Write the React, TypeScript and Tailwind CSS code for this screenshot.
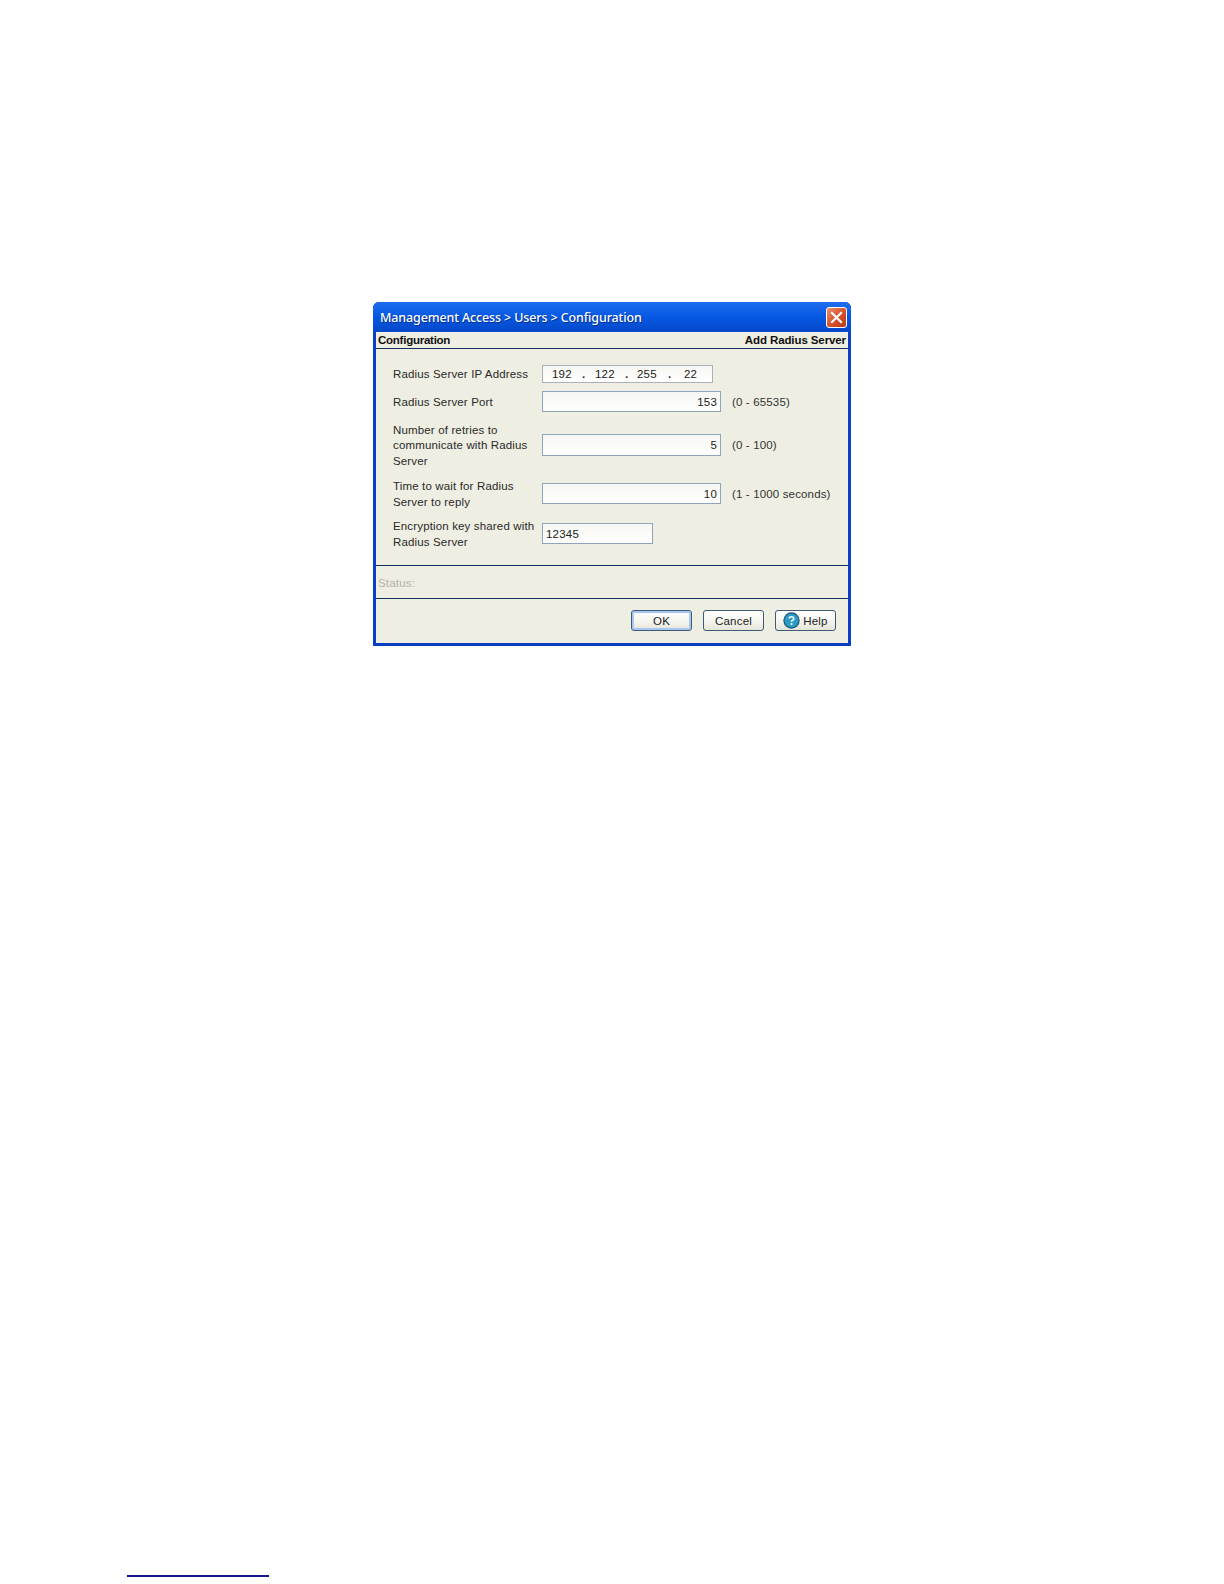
import React from "react";

const labelCls = "w-[149px] shrink-0 pt-[2px] text-[11.5px] leading-[15.3px] text-[#2a2a2a] tracking-[0.15px]";
const inputCls = "border border-[#8fa3bf] bg-gradient-to-b from-[#f6f6f2] to-[#ffffff] pt-[2px] text-[11.5px] text-[#222] tracking-[0.2px] flex items-center";
const hintCls = "ml-[11px] pt-[2px] text-[11.5px] text-[#333] tracking-[0.15px] whitespace-nowrap";
const btnCls = "w-[61px] h-[21px] pt-[2px] rounded-[3px] border border-[#3f5a78] bg-gradient-to-b from-[#ffffff] via-[#f6f6f0] to-[#e6e5da] text-[11.5px] text-[#222] tracking-[0.2px] flex items-center justify-center";

function NumRow({ label, value, hint, h, mt, rowH }: { label: React.ReactNode; value: string; hint: string; h: string; mt: string; rowH: string }) {
  return (
    <div className={`flex items-center ${mt} ${rowH}`}>
      <div className={labelCls}>{label}</div>
      <div className={`${inputCls} ${h} w-[179px] justify-end pr-[3px]`}>{value}</div>
      <div className={hintCls}>{hint}</div>
    </div>
  );
}

export default function App() {
  return (
    <div className="relative h-[1584px] w-[1224px] bg-white overflow-hidden font-['Liberation_Sans',Arial,sans-serif]">
      <div className="pl-[373px] pt-[302px]">
        <div className="flex h-[344px] w-[478px] flex-col rounded-t-[6px] rounded-b-[1px] border-x-[3px] border-b-[3px] border-[#0a3fc4] bg-[#0a3fc4]">
          <div className="-mx-[3px] flex h-[30px] shrink-0 items-center justify-between rounded-t-[6px] bg-gradient-to-b from-[#1f6df0] via-[#0558e2] to-[#0448c8] pl-[7px] pr-[4px]">
            <span className="font-['Noto_Sans',sans-serif] text-[12.5px] font-medium tracking-[-0.13px] text-white [text-shadow:1px_1px_0_#0a2f90] pt-[3px]">
              Management Access &gt; Users &gt; Configuration
            </span>
            <span className="flex h-[21px] w-[21px] items-center justify-center rounded-[3px] border border-white bg-gradient-to-br from-[#e8906c] via-[#d9542c] to-[#b83a18]">
              <svg width="13" height="13" viewBox="0 0 13 13">
                <path d="M2 2 L11 11 M11 2 L2 11" stroke="#ffffff" strokeWidth="2.2" strokeLinecap="square" />
              </svg>
            </span>
          </div>
          <div className="flex flex-1 flex-col bg-[#eeeee2] border-t border-[#f4f4ec]">
            <div className="flex h-[16px] shrink-0 items-center justify-between border-b border-[#14305c] pl-[2px] pr-[2px] text-[11.5px] font-bold tracking-[-0.1px] text-[#111]">
              <span className="tracking-[-0.25px]">Configuration</span>
              <span>Add Radius Server</span>
            </div>

            <div className="pl-[17px]">
              <div className="mt-[16px] flex h-[18px] items-center">
                <div className={labelCls}>Radius Server IP Address</div>
                <div className={`${inputCls} h-[18px] w-[171px] border-[#a9b1bc] pl-[9px] whitespace-pre`}>
                  <span className="w-[30px]">192</span>
                  <span className="w-[12px] font-bold">.</span>
                  <span className="w-[31px] pl-[1px]">122</span>
                  <span className="w-[12px] font-bold">.</span>
                  <span className="w-[31px]">255</span>
                  <span className="w-[16px] font-bold">.</span>
                  <span>22</span>
                </div>
              </div>
              <NumRow label="Radius Server Port" value="153" hint="(0 - 65535)" h="h-[21px]" mt="mt-[8px]" rowH="h-[21px]" />
              <NumRow
                label={<>Number of retries to<br />communicate with Radius<br />Server</>}
                value="5"
                hint="(0 - 100)"
                h="h-[22px]"
                mt="mt-[10px]"
                rowH="h-[46px]"
              />
              <NumRow
                label={<>Time to wait for Radius<br />Server to reply</>}
                value="10"
                hint="(1 - 1000 seconds)"
                h="h-[21px]"
                mt="mt-[10px]"
                rowH="h-[31px]"
              />
              <div className="mt-[9px] flex h-[31px] items-center">
                <div className={labelCls}>Encryption key shared with<br />Radius Server</div>
                <div className={`${inputCls} h-[21px] w-[111px] pl-[3px]`}>12345</div>
              </div>
            </div>

            <div className="mt-[16px] flex h-[34px] items-center border-y border-[#14305c] pl-[2px] pt-[3px] text-[11.5px] tracking-[0.2px] text-[#b4b4ac]">
              Status:
            </div>

            <div className="mt-[11px] flex justify-end gap-[11px] pr-[12px]">
              <div className={`${btnCls} border-[#2f5080] shadow-[inset_0_0_0_2px_#a9c6ee]`}>OK</div>
              <div className={btnCls}>Cancel</div>
              <div className={`${btnCls} gap-[3px]`}>
                <svg width="17" height="17" viewBox="0 0 16 16" className="-mt-[2px] shrink-0">
                  <circle cx="8" cy="8" r="7.7" fill="#1f4f7a" />
                  <circle cx="8" cy="8" r="6.7" fill="#2a9cc4" />
                  <path d="M5.8 6.2 C5.9 3.9 10.2 3.9 10.2 6.2 C10.2 7.8 8 7.6 8 9.2" fill="none" stroke="#ffffff" strokeWidth="1.6" />
                  <circle cx="8" cy="11.4" r="1" fill="#ffffff" />
                </svg>
                Help
              </div>
            </div>
          </div>
        </div>
      </div>
      <div className="absolute left-[127px] top-[1575px] h-[1.5px] w-[142px] bg-[#14148c]" />
    </div>
  );
}
